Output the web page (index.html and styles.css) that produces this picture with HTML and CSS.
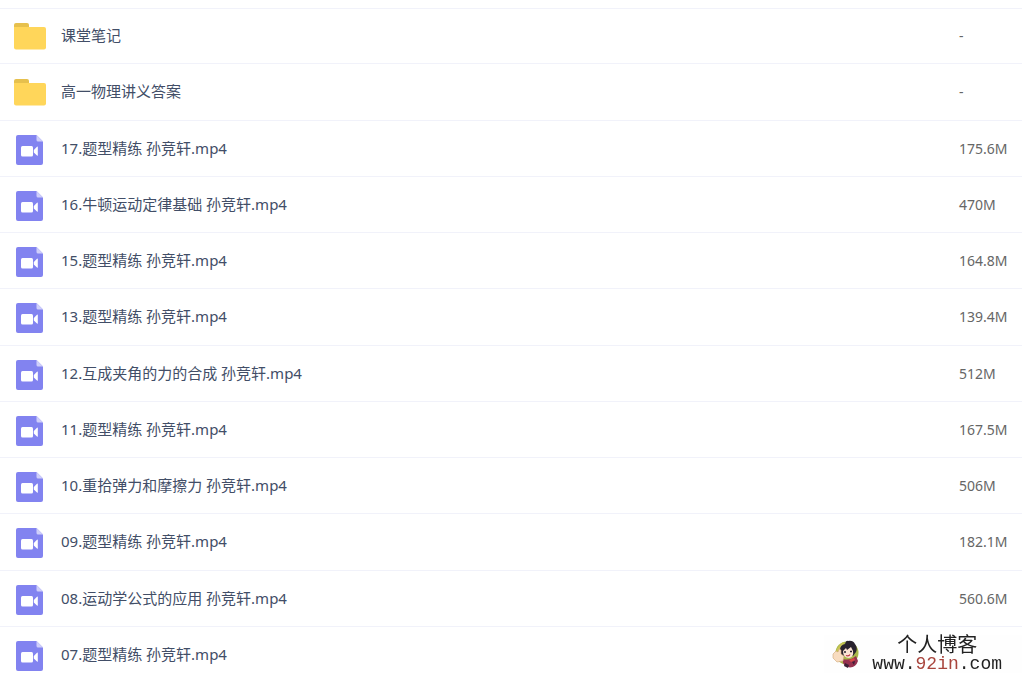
FILE: index.html
```
<!DOCTYPE html>
<html lang="zh-CN">
<head>
<meta charset="utf-8">
<meta name="viewport" content="width=device-width, initial-scale=1">
<title>文件列表</title>
<link rel="stylesheet" href="styles.css">
</head>
<body>
<svg class="sprite" aria-hidden="true">
  <symbol id="folder" viewBox="0 0 32 27">
    <path fill="#e6c04d" d="M0 2q0-2 2-2h11q2 0 2 2v6H0z"/>
    <path fill="#ffd65a" d="M0 4h30q2 0 2 2v18.500q0 2-2 2H2q-2 0-2-2z"/>
  </symbol>
  <symbol id="video" viewBox="0 0 27 30">
    <path fill="#8283f0" d="M2 0h18.500L27 6.500V28q0 2-2 2H2q-2 0-2-2V2q0-2 2-2z"/>
    <path fill="#cfcffa" d="M20.500 0L27 6.500h-5q-1.500 0-1.500-1.500z"/>
    <rect x="5" y="11" width="12" height="10.500" rx="1.500" fill="#fff"/>
    <path fill="#fff" d="M17.800 15l3.200-3.200q.8-.6.800.3v8.200q0 .9-.8.300L17.800 17.500z"/>
  </symbol>
</svg>
<main>
<table class="files">
<tbody>
<tr class="row"><td class="name"><a class="link" href="#"><svg class="icon folder"><use href="#folder"/></svg><span class="label">课堂笔记</span></a></td><td class="size">-</td></tr>
<tr class="row"><td class="name"><a class="link" href="#"><svg class="icon folder"><use href="#folder"/></svg><span class="label">高一物理讲义答案</span></a></td><td class="size">-</td></tr>
<tr class="row"><td class="name"><a class="link" href="#"><svg class="icon video"><use href="#video"/></svg><span class="label">17.题型精练 孙竞轩.mp4</span></a></td><td class="size">175.6M</td></tr>
<tr class="row"><td class="name"><a class="link" href="#"><svg class="icon video"><use href="#video"/></svg><span class="label">16.牛顿运动定律基础 孙竞轩.mp4</span></a></td><td class="size">470M</td></tr>
<tr class="row"><td class="name"><a class="link" href="#"><svg class="icon video"><use href="#video"/></svg><span class="label">15.题型精练 孙竞轩.mp4</span></a></td><td class="size">164.8M</td></tr>
<tr class="row"><td class="name"><a class="link" href="#"><svg class="icon video"><use href="#video"/></svg><span class="label">13.题型精练 孙竞轩.mp4</span></a></td><td class="size">139.4M</td></tr>
<tr class="row"><td class="name"><a class="link" href="#"><svg class="icon video"><use href="#video"/></svg><span class="label">12.互成夹角的力的合成 孙竞轩.mp4</span></a></td><td class="size">512M</td></tr>
<tr class="row"><td class="name"><a class="link" href="#"><svg class="icon video"><use href="#video"/></svg><span class="label">11.题型精练 孙竞轩.mp4</span></a></td><td class="size">167.5M</td></tr>
<tr class="row"><td class="name"><a class="link" href="#"><svg class="icon video"><use href="#video"/></svg><span class="label">10.重拾弹力和摩擦力 孙竞轩.mp4</span></a></td><td class="size">506M</td></tr>
<tr class="row"><td class="name"><a class="link" href="#"><svg class="icon video"><use href="#video"/></svg><span class="label">09.题型精练 孙竞轩.mp4</span></a></td><td class="size">182.1M</td></tr>
<tr class="row"><td class="name"><a class="link" href="#"><svg class="icon video"><use href="#video"/></svg><span class="label">08.运动学公式的应用 孙竞轩.mp4</span></a></td><td class="size">560.6M</td></tr>
<tr class="row"><td class="name"><a class="link" href="#"><svg class="icon video"><use href="#video"/></svg><span class="label">07.题型精练 孙竞轩.mp4</span></a></td><td class="size"></td></tr>
</tbody>
</table>
</main>
<aside class="mark">
  <svg class="avatar" viewBox="0 0 28 28" aria-hidden="true">
    <circle cx="15" cy="13" r="11.500" fill="#a9b84a"/>
    <path fill="#c9c455" d="M4 11q3-7 8-9l-2 10z"/>
    <path fill="#29232f" d="M8 10q0-5 5-6 1-4 3-3 5-1 7 3 3 4 1 8l-3 4H11q-4-3-3-6z"/>
    <path fill="#fbe3d3" d="M11 11l3-3 1 2 4-3 2 4q1 6-4 7-6 0-6-7z"/>
    <path d="M12 12h2M18 11.500h2" stroke="#29232f" stroke-width="1.300"/>
    <path d="M14 15.500q3 1 4-1" stroke="#b93545" stroke-width="1.200" fill="none"/>
    <path fill="#96314f" d="M11 19q7 2 13-3l2 5q-2 6-8 6.500-6-1-7-5z"/>
    <path fill="#3c1f35" d="M13 23l4 2-1 3-4-2zM20 22l3-1-1 4z"/>
    <path fill="#d84a45" d="M17 20l5-2 1 2-4 2z"/>
    <path fill="#f8dcc0" stroke="#d0a878" stroke-width=".6" d="M1 14l3-3 2 1 1-3 2 1v4l3 2-1 5-6 1-4-4z"/>
  </svg>
  <div class="site">
    <span class="title">个人博客</span>
    <span class="url">www.<span class="accent">92in</span>.com</span>
  </div>
</aside>
</body>
</html>
```
FILE: styles.css
```
body {
  margin: 0;
  padding-top: 8px;
  background: #fff;
  font-family: "Noto Sans", "Noto Sans CJK SC", sans-serif;
  font-size: 15px;
  line-height: 20px;
}

.sprite {
  position: absolute;
  width: 0;
  height: 0;
}

.files {
  width: 100%;
  border-collapse: separate;
  border-spacing: 0;
  border-top: 1px solid #f1f2fa;
}

.row {
  height: 56px;
}

.row:first-child {
  height: 55px;
}

.row:nth-child(4n + 2) {
  height: 57px;
}

.name,
.size {
  padding: 0;
  border-bottom: 1px solid #f1f2fa;
}

.name {
  padding-left: 14px;
}

.size {
  width: 63px;
  font-size: 14px;
  color: #666;
}

.link {
  display: flex;
  align-items: center;
  gap: 15px;
  color: #424e67;
  text-decoration: none;
}

.label {
  padding-bottom: 2px;
}

.icon {
  flex: none;
}

.folder {
  width: 32px;
  height: 27px;
}

.video {
  width: 27px;
  height: 30px;
  margin: 2px 3px 0 2px;
}

.mark {
  position: fixed;
  right: 0;
  bottom: 3px;
  display: flex;
  align-items: center;
  gap: 12px;
  padding: 0 20px 0 8px;
  background: #fefefe;
}

.avatar {
  width: 28px;
  height: 28px;
}

.site {
  display: flex;
  flex-direction: column;
  align-items: center;
  color: #222;
}

.title {
  font-family: "Liberation Serif", "Noto Sans CJK SC", serif;
  font-size: 20px;
  line-height: 20px;
}

.url {
  font-family: "Liberation Mono", monospace;
  font-size: 18px;
  line-height: 18px;
}

.accent {
  color: #a8443c;
}
```
